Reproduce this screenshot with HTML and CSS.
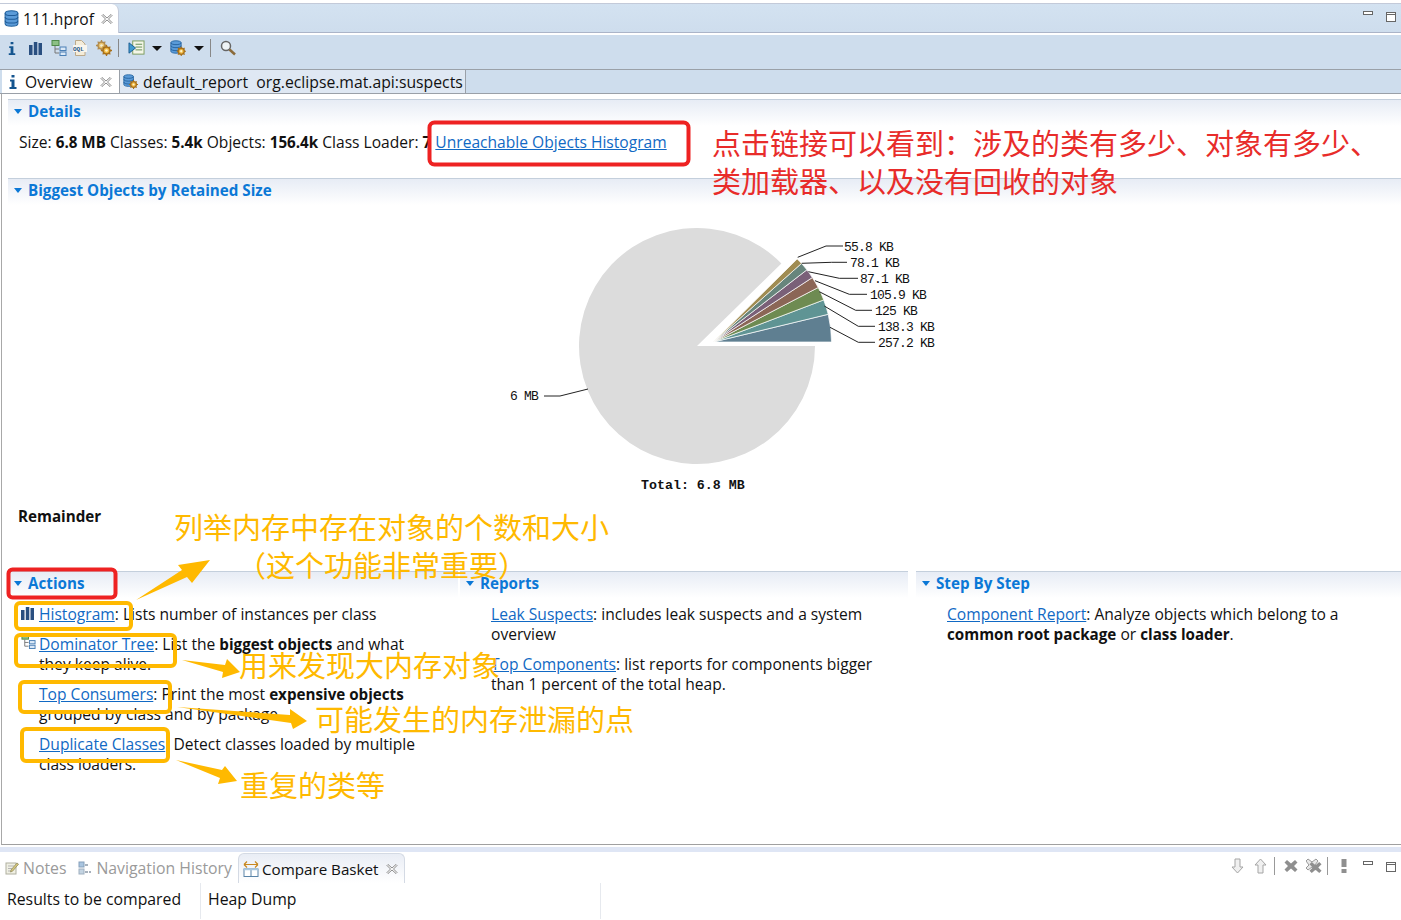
FILE: index.html
```html
<!DOCTYPE html>
<html lang="en">
<head>
<meta charset="utf-8">
<title>111.hprof</title>
<link rel="stylesheet" href="styles.css">
</head>
<body>
<svg class="defs" width="0" height="0">
  <defs>
    <symbol id="i-close" viewBox="0 0 12 12"><path d="M2 1.500 6 5l4-3.500 1 1L7.500 6l3.500 3.500-1 1L6 7 2 10.500l-1-1L4.500 6 1 2.500z" fill="#fff" stroke="#8a8a8a"/></symbol>
    <symbol id="i-info" viewBox="0 0 8 14"><path d="M2.500 0h3v2.500h-3zM1 4.500h4.500V12H7.500v2H.5V12H2.500V6.500H1z" fill="#14558f"/></symbol>
    <symbol id="i-bars" viewBox="0 0 13 13"><path d="M0 3h3.500v10H0zM4.800 0h3.500v13H4.800zM9.500 1h3.500v12H9.500z" fill="#2a4f80"/></symbol>
    <symbol id="i-tree" viewBox="0 0 16 16"><rect x="1" y="0.500" width="7" height="5" fill="#8cc084" stroke="#4f8a4a"/><path d="M4 6v7h4M4 9h4" fill="none" stroke="#777"/><rect x="9" y="7" width="6" height="3.500" fill="#dbe9f7" stroke="#4a7fb5"/><rect x="9" y="12" width="6" height="3.500" fill="#dbe9f7" stroke="#4a7fb5"/></symbol>
    <symbol id="i-db" viewBox="0 0 14 16"><path d="M1 3c0-3 12-3 12 0v10c0 3-12 3-12 0z" fill="#5b9bd8" stroke="#23639f"/><path d="M1 3c0 3 12 3 12 0M1 6.500c0 3 12 3 12 0M1 10c0 3 12 3 12 0" fill="none" stroke="#1f5c99"/></symbol>
    <symbol id="i-gear" viewBox="0 0 10 10"><circle cx="5" cy="5" r="3.200" fill="#f0b840" stroke="#a8701a" stroke-width="1.400"/><circle cx="5" cy="5" r="1.200" fill="#fff4cc"/><path d="M5 0v2M5 8v2M0 5h2M8 5h2M1.500 1.500l1.400 1.400M7.100 7.100l1.400 1.400M8.500 1.500 7.100 2.900M2.900 7.100 1.500 8.500" stroke="#a8701a" stroke-width="1.200"/></symbol>
    <symbol id="i-dbgear" viewBox="0 0 16 16"><use href="#i-db" x="0" y="0" width="12" height="14"/><use href="#i-gear" x="6.500" y="6.500" width="9.500" height="9.500"/></symbol>
    <symbol id="i-gears" viewBox="0 0 16 16"><use href="#i-gear" x="0" y="0" width="11" height="11" opacity=".75"/><use href="#i-gear" x="5" y="5" width="11" height="11"/></symbol>
    <symbol id="i-oql" viewBox="0 0 14 16"><path d="M2.500 .500h6l3.500 3.500v11.500h-9.500z" fill="#f4ecd9" stroke="#bca98a"/><rect x="0" y="5" width="14" height="7" fill="#f8f5ee"/><text x="0" y="11" class="oql-text">OQL</text></symbol>
    <symbol id="i-run" viewBox="0 0 18 17"><rect x="5" y="1" width="12" height="14" fill="#f4f6e8" stroke="#7a9a5a"/><path d="M8 4.500h7M8 7.500h7M8 10.500h7" stroke="#5e8a4e"/><path d="M1 3l7 5.500L1 14z" fill="#3f9ad0" stroke="#1b5c8f"/></symbol>
    <symbol id="i-search" viewBox="0 0 16 16"><circle cx="6" cy="6" r="4.500" fill="#eef3f6" stroke="#666" stroke-width="1.500"/><path d="M9.500 9.500 15 14.500" stroke="#8a6a3a" stroke-width="2.500"/></symbol>
    <symbol id="i-notes" viewBox="0 0 14 14"><rect x="1" y="2" width="10" height="11" fill="#f0f0e4" stroke="#b0b0a0"/><path d="M3 5h6M3 7.500h4M3 10h3" stroke="#b5b5b5"/><path d="M6 9 12 2l1.500 1.200-6 7L5.500 11z" fill="#d8c878" stroke="#a09a70"/></symbol>
    <symbol id="i-nav" viewBox="0 0 14 14"><rect x="1" y="1" width="5" height="5" fill="#a9c5e0" stroke="#86a0bb"/><rect x="1" y="8" width="5" height="5" fill="#c4d4e2" stroke="#9fb0c0"/><path d="M7 4h3M7 11h3M11 11h2" stroke="#8a98a6" stroke-width="1.500"/></symbol>
    <symbol id="i-compare" viewBox="0 0 16 16"><path d="M1 3.500h14M1 3.500l3-3M1 3.500l3 3M15 3.500l-3-3M15 3.500l-3 3" fill="none" stroke="#c8871e" stroke-width="1.200"/><rect x="1" y="8" width="14" height="7.500" fill="#fff" stroke="#5a84a8"/><path d="M8 8v7.500" stroke="#5a84a8"/><path d="M1 8.500h14" stroke="#a8c8e0" stroke-width="1.500"/></symbol>
    <symbol id="i-down" viewBox="0 0 13 16"><path d="M4 1h5v8h3l-5.500 6L1 9h3z" fill="#f0f0f0" stroke="#a5a5a5"/></symbol>
    <symbol id="i-up" viewBox="0 0 13 16"><path d="M4 15h5V7h3L6.500 1 1 7h3z" fill="#f0f0f0" stroke="#a5a5a5"/></symbol>
    <symbol id="i-x" viewBox="0 0 14 14"><path d="M3 1l4 3.500L11 1l2.500 2.500L10 7l3.500 3.500L11 13 7 9.500 3 13 .500 10.500 4 7 .500 3.500z" fill="#8f8f8f"/></symbol>
    <symbol id="i-xx" viewBox="0 0 16 16"><path d="M2 1l4 3 4-3 2 2-3 4 3 3-2 2-4-3-4 3-2-2 3-3-3-4z" fill="#e8e8e8" stroke="#999"/><use href="#i-x" x="3" y="3" width="13" height="13"/></symbol>
    <symbol id="i-bang" viewBox="0 0 6 14"><path d="M.500 0h5v8h-5zM.500 10h5v4h-5z" fill="#8f8f8f"/></symbol>
    <symbol id="i-min" viewBox="0 0 10 5"><rect x=".500" y=".500" width="9" height="3" fill="#fff" stroke="#666"/></symbol>
    <symbol id="i-max" viewBox="0 0 10 10"><rect x=".500" y=".500" width="9" height="9" fill="#fff" stroke="#666"/><path d="M1 2.500h8" stroke="#666"/></symbol>
  </defs>
</svg>

<header class="editor-bar">
  <div class="tab tab-file">
    <svg class="ic ic-16"><use href="#i-db"/></svg>
    <span>111.hprof</span>
    <svg class="ic-close"><use href="#i-close"/></svg>
  </div>
  <div class="win-btns">
    <svg class="ic-min"><use href="#i-min"/></svg>
    <svg class="ic-max"><use href="#i-max"/></svg>
  </div>
</header>

<nav class="toolbar">
  <svg class="tool t-info"><use href="#i-info"/></svg>
  <svg class="tool t-bars"><use href="#i-bars"/></svg>
  <svg class="tool t-tree"><use href="#i-tree"/></svg>
  <svg class="tool t-oql"><use href="#i-oql"/></svg>
  <svg class="tool t-gears"><use href="#i-gears"/></svg>
  <span class="tool-sep"></span>
  <svg class="tool t-run"><use href="#i-run"/></svg>
  <span class="caret c1"></span>
  <svg class="tool t-dbgear"><use href="#i-dbgear"/></svg>
  <span class="caret c2"></span>
  <span class="tool-sep"></span>
  <svg class="tool t-search"><use href="#i-search"/></svg>
</nav>

<div class="inner-tabs">
  <div class="tab tab-overview">
    <svg class="ic-info"><use href="#i-info"/></svg>
    <span>Overview</span>
    <svg class="ic-close"><use href="#i-close"/></svg>
  </div>
  <div class="tab tab-report">
    <svg class="ic ic-16"><use href="#i-dbgear"/></svg>
    <span>default_report&nbsp; org.eclipse.mat.api:suspects</span>
  </div>
</div>

<main class="content">
  <section class="section sec-details">
    <h2 class="sec-head"><span class="twisty"></span>Details</h2>
    <p class="details-line">Size: <b>6.8 MB</b> Classes: <b>5.4k</b> Objects: <b>156.4k</b> Class Loader: <b>7</b> <a href="#">Unreachable Objects Histogram</a></p>
  </section>

  <section class="section sec-biggest">
    <h2 class="sec-head"><span class="twisty"></span>Biggest Objects by Retained Size</h2>
    <svg class="pie" viewBox="500 205 460 295" width="460" height="295">
      <path d="M697 346H815A118 118 0 1 1 781.400 263.500Z" fill="#dcdcdc"/>
      <g stroke="#fff" stroke-width=".7">
        <path d="M713.500 342H831.500A118 118 0 0 0 828.200 314.300Z" fill="#5f7f91"/>
        <path d="M713.500 342L828.200 314.300A118 118 0 0 0 823.700 299.900Z" fill="#5f9494"/>
        <path d="M713.500 342L823.700 299.900A118 118 0 0 0 818.200 287.500Z" fill="#6e8b52"/>
        <path d="M713.500 342L818.200 287.500A118 118 0 0 0 812.300 277.600Z" fill="#8b6656"/>
        <path d="M713.500 342L812.300 277.600A118 118 0 0 0 806.900 269.800Z" fill="#7a6078"/>
        <path d="M713.500 342L806.900 269.800A118 118 0 0 0 801.500 263.400Z" fill="#67857c"/>
        <path d="M713.500 342L801.500 263.400A118 118 0 0 0 797.200 258.900Z" fill="#a08c52"/>
      </g>
      <g class="leaders">
        <path d="M797.700 257.300 826 246H843"/>
        <path d="M801.700 263.300 831.700 262.300H847"/>
        <path d="M808.300 271.700 839.300 278.300H858"/>
        <path d="M815 280.700 849.300 294.300H867"/>
        <path d="M819.300 291.700 855.700 310.300H872"/>
        <path d="M824.300 306 858.300 326.300H875"/>
        <path d="M830 327.300 858.300 342.300H875"/>
        <path d="M544 396H560L588 389"/>
      </g>
      <g class="pie-labels">
        <text x="844" y="251">55.8 KB</text>
        <text x="850" y="267">78.1 KB</text>
        <text x="860" y="283">87.1 KB</text>
        <text x="870" y="299">105.9 KB</text>
        <text x="875" y="315">125 KB</text>
        <text x="878" y="331">138.3 KB</text>
        <text x="878" y="347">257.2 KB</text>
        <text x="510" y="400">6 MB</text>
      </g>
      <text class="pie-total" x="641" y="489">Total: 6.8 MB</text>
    </svg>
    <p class="remainder">Remainder</p>
  </section>

  <div class="columns">
    <section class="section col col-actions">
      <h2 class="sec-head"><span class="twisty"></span>Actions</h2>
      <div class="col-body">
        <p class="item"><svg class="item-ic"><use href="#i-bars"/></svg><a href="#">Histogram</a>: Lists number of instances per class</p>
        <p class="item"><svg class="item-ic item-ic-tree"><use href="#i-tree"/></svg><a href="#">Dominator Tree</a>: List the <b>biggest objects</b> and what<br>they keep alive.</p>
        <p class="item"><a href="#">Top Consumers</a>: Print the most <b>expensive objects</b><br>grouped by class and by package.</p>
        <p class="item"><a href="#">Duplicate Classes</a>: Detect classes loaded by multiple<br>class loaders.</p>
      </div>
    </section>
    <section class="section col col-reports">
      <h2 class="sec-head"><span class="twisty"></span>Reports</h2>
      <div class="col-body">
        <p class="item"><a href="#">Leak Suspects</a>: includes leak suspects and a system<br>overview</p>
        <p class="item"><a href="#">Top Components</a>: list reports for components bigger<br>than 1 percent of the total heap.</p>
      </div>
    </section>
    <section class="section col col-steps">
      <h2 class="sec-head"><span class="twisty"></span>Step By Step</h2>
      <div class="col-body">
        <p class="item"><a href="#">Component Report</a>: Analyze objects which belong to a<br><b>common root package</b> or <b>class loader</b>.</p>
      </div>
    </section>
  </div>
</main>

<footer class="bottom">
  <div class="bottom-tabs">
    <div class="btab btab-dim"><svg class="ic-14"><use href="#i-notes"/></svg>Notes</div>
    <div class="btab btab-dim"><svg class="ic-14"><use href="#i-nav"/></svg>Navigation History</div>
    <div class="btab btab-active"><svg class="ic-cmp"><use href="#i-compare"/></svg>Compare Basket<svg class="ic-close"><use href="#i-close"/></svg></div>
    <div class="bottom-tools">
      <svg class="bt bt-arrow"><use href="#i-down"/></svg>
      <svg class="bt bt-arrow bt-up"><use href="#i-up"/></svg>
      <span class="bt-sep"></span>
      <svg class="bt bt-x"><use href="#i-x"/></svg>
      <svg class="bt bt-xx"><use href="#i-xx"/></svg>
      <span class="bt-sep bt-sep2"></span>
      <svg class="bt bt-bang"><use href="#i-bang"/></svg>
      <svg class="ic-min"><use href="#i-min"/></svg>
      <svg class="ic-max"><use href="#i-max"/></svg>
    </div>
  </div>
  <div class="table-head">
    <div class="th th-1">Results to be compared</div>
    <div class="th th-2">Heap Dump</div>
  </div>
</footer>

<svg class="marks" viewBox="0 0 1401 920" width="1401" height="920">
  <g class="box-red">
    <rect x="429.500" y="122.500" width="259" height="42" rx="5"/>
    <rect x="8.500" y="569.500" width="107" height="28" rx="4"/>
  </g>
  <g class="box-yellow">
    <rect x="16" y="603" width="115" height="26" rx="4"/>
    <rect x="16" y="635" width="159" height="31" rx="4"/>
    <rect x="20" y="682" width="150" height="30" rx="4"/>
    <rect x="22" y="729" width="146" height="32" rx="4"/>
  </g>
  <g class="arrows">
    <path d="M136 600 182 570 178 565 210 560 192 583 187 577Z"/>
    <path d="M182 660 225 665 227 659 240 672 222 678 223 672Z"/>
    <path d="M177 707 290 715 290 709 307 721 293 729 291 723Z"/>
    <path d="M176 760 222 770 225 766 237 781 218 784 220 778Z"/>
  </g>
</svg>
<div class="note note-red n1">点击链接可以看到：涉及的类有多少、对象有多少、</div>
<div class="note note-red n2">类加载器、以及没有回收的对象</div>
<div class="note note-yel n3">列举内存中存在对象的个数和大小</div>
<div class="note note-yel n4">（这个功能非常重要）</div>
<div class="note note-yel n5">用来发现大内存对象</div>
<div class="note note-yel n6">可能发生的内存泄漏的点</div>
<div class="note note-yel n7">重复的类等</div>
</body>
</html>
```
FILE: styles.css
```css
* { box-sizing: border-box; }
html, body { margin: 0; padding: 0; }
body {
  position: relative;
  width: 1401px;
  height: 920px;
  overflow: hidden;
  background: #fff;
  color: #111;
  font: 15.600px/20px "Open Sans", "Noto Sans", sans-serif;
}
b { font-size: 15.200px; }
.defs { position: absolute; }
.oql-text { font: bold 6px "Liberation Mono", monospace; fill: #2a5a88; }
p { margin: 0; }
a { color: #1169c4; text-decoration: underline; }

.editor-bar {
  display: flex;
  justify-content: space-between;
  height: 30px;
  margin-top: 3px;
  border-top: 1px solid #c3cad9;
  border-bottom: 1px solid #abb4c8;
  background: linear-gradient(#d3e2f1, #cedded);
}
.tab { display: flex; align-items: center; }
.tab-file {
  width: 119px;
  height: 29px;
  padding-left: 4px;
  background: #fff;
  border-top-right-radius: 7px;
  border-right: 1px solid #c3cad9;
  gap: 4px;
}
.ic-16 { width: 15px; height: 17px; flex: none; }
.ic-close { width: 12px; height: 12px; margin-left: 3px; flex: none; }
.win-btns { display: flex; align-items: flex-start; gap: 13px; padding: 7px 5px 0 0; }
.ic-min { width: 10px; height: 5px; flex: none; }
.ic-max { width: 10px; height: 10px; margin-top: 1px; flex: none; }

.toolbar {
  display: flex;
  align-items: center;
  height: 35px;
  margin-top: 2px;
  padding: 0 0 8px 6px;
  background: #cedded;
  border-bottom: 1px solid #9aa0a8;
}
.tool { width: 16px; height: 16px; flex: none; }
.t-info { width: 12px; height: 13px; margin-right: 11px; }
.t-bars { width: 13px; height: 13px; margin-right: 9px; }
.t-tree { margin-right: 6px; }
.t-oql { width: 14px; margin-right: 9px; }
.t-gears { margin-right: 6px; }
.tool-sep { width: 1px; height: 18px; background: #888; flex: none; margin-right: 9px; }
.t-run { width: 17px; margin-right: 7px; }
.caret {
  width: 0; height: 0; flex: none;
  border-left: 5px solid transparent;
  border-right: 5px solid transparent;
  border-top: 5px solid #111;
}
.c1 { margin-right: 8px; }
.c2 { margin-right: 6px; }
.t-dbgear { margin-right: 8px; }

.inner-tabs {
  display: flex;
  height: 24px;
  background: #cedded;
  border-bottom: 1px solid #9aa0a8;
}
.tab-overview {
  width: 117px;
  height: 23px;
  margin-left: 2px;
  padding-left: 7px;
  background: #fff;
  gap: 8px;
}
.tab-overview .ic-close { margin-left: -1px; }
.ic-info { width: 8px; height: 14px; flex: none; }
.tab-report {
  width: 347px;
  height: 23px;
  padding-left: 3px;
  gap: 5px;
  background: #dfe8f3;
  border-left: 1px solid #9aa0a8;
  border-right: 1px solid #9aa0a8;
  font-size: 15.750px;
}

.content {
  height: 751px;
  margin-left: 1px;
  padding: 5px 0 0 6px;
  border-left: 1px solid #a8a8a8;
  border-bottom: 1px solid #a0a0a0;
  box-shadow: 0 2px 0 #fff, 0 3px 0 #a8a8a8;
  display: flex;
  flex-direction: column;
}
.section { min-width: 0; }
.sec-details { height: 79px; }
.sec-biggest { height: 393px; }
.sec-head {
  display: flex;
  align-items: center;
  height: 27px;
  margin: 0;
  padding: 0 0 4px 6px;
  font-size: 15.200px;
  font-weight: 700;
  color: #0b78d6;
  background: linear-gradient(#e7ecf5, #fff);
  border-top: 1px solid #c4cfdc;
}
.twisty {
  width: 0; height: 0;
  margin-right: 6px;
  border-left: 4.500px solid transparent;
  border-right: 4.500px solid transparent;
  border-top: 5px solid #0b78d6;
}
.details-line { padding: 6px 0 0 11px; }
.pie { display: block; margin: 0 0 0 492px; }
.leaders path { fill: none; stroke: #222; stroke-width: 1; }
.pie-labels text { font: 13px "Liberation Mono", monospace; letter-spacing: -.8px; fill: #111; }
.pie-total { font: bold 13.300px "Liberation Mono", monospace; fill: #111; }
.remainder { margin: 6px 0 0 10px; font-weight: 700; font-size: 15.200px; }

.columns { display: flex; }
.col-actions { width: 450px; margin-right: 2px; }
.col-reports { width: 448px; margin-right: 8px; }
.col-steps { flex: 1; }
.col-body { padding-top: 6px; }
.col-actions .col-body { padding-left: 31px; }
.col-reports .col-body { padding-left: 31px; }
.col-steps .col-body { padding-left: 31px; }
.item { position: relative; margin-bottom: 10px; }
.item-ic { position: absolute; left: -18px; top: 3px; width: 13px; height: 13px; }
.item-ic-tree { top: 0; width: 15px; height: 15px; }

.bottom { margin-top: 7px; font-size: 15.800px; }
.bottom-tabs {
  display: flex;
  align-items: center;
  height: 31px;
  padding-left: 5px;
  border-top: 1px solid #fff;
  box-shadow: 0 -5px 0 #dfe6f5;
}
.btab { display: flex; align-items: center; gap: 4px; height: 30px; }
.btab-dim { color: #9a9a9a; margin-right: 12px; }
.btab-active {
  color: #111;
  width: 167px;
  margin-left: -6px;
  padding-left: 4px;
  gap: 3px;
  font-size: 15.200px;
  background: linear-gradient(#e9edf5, #fff);
  border: 1px solid #d4dae4;
  border-bottom: 0;
  border-top-left-radius: 6px;
  border-top-right-radius: 6px;
}
.btab-active .ic-close { margin-left: 4px; }
.ic-14 { width: 14px; height: 14px; flex: none; }
.ic-cmp { width: 16px; height: 16px; flex: none; }
.bottom-tools { display: flex; align-items: center; margin-left: auto; padding: 0 5px 4px 0; }
.bt { flex: none; }
.bt-arrow { width: 13px; height: 16px; }
.bt-up { margin-left: 10px; }
.bt-x { width: 14px; height: 14px; margin-left: 9px; }
.bt-xx { width: 16px; height: 16px; margin-left: 8px; }
.bt-bang { width: 6px; height: 14px; margin-left: 13px; }
.bt-sep { width: 1px; height: 18px; background: #999; margin-left: 7px; }
.bt-sep2 { margin-left: 5px; }
.bottom-tools .ic-min { margin: 0 0 6px 16px; }
.bottom-tools .ic-max { margin-left: 13px; }

.table-head { display: flex; height: 36px; }
.th { padding: 6px 0 0 7px; border-right: 1px solid #e6e9ee; }
.th-1 { width: 201px; }
.th-2 { width: 400px; }

.marks { position: absolute; left: 0; top: 0; pointer-events: none; }
.box-red rect { fill: none; stroke: #ee2222; stroke-width: 4; }
.box-yellow rect { fill: none; stroke: #ffb900; stroke-width: 4; }
.arrows path { fill: #ffb900; }
.note {
  position: absolute;
  font: 400 29px/38px "Noto Sans CJK SC", sans-serif;
  white-space: nowrap;
}
.note-red { color: #e82c2a; }
.note-yel { color: #ffb900; }
.n1 { left: 712px; top: 123px; }
.n2 { left: 712px; top: 161px; }
.n3 { left: 174px; top: 507px; }
.n4 { left: 237px; top: 545px; }
.n5 { left: 239px; top: 645px; }
.n6 { left: 315px; top: 699px; }
.n7 { left: 240px; top: 765px; }
```
